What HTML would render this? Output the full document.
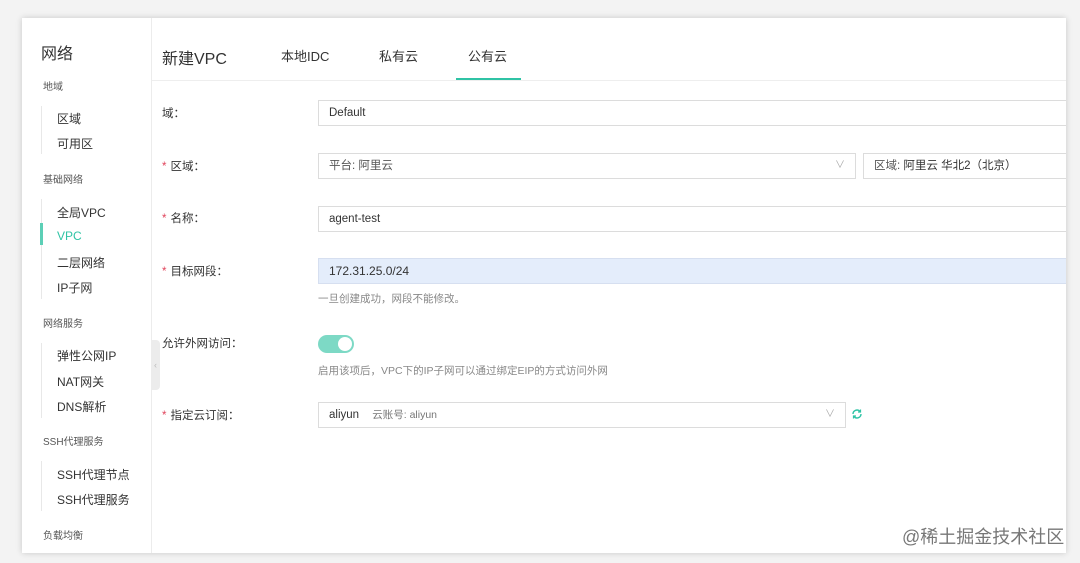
<!DOCTYPE html>
<html><head><meta charset="utf-8"><style>
*{box-sizing:border-box;margin:0;padding:0}
body{width:1080px;height:563px;background:#f3f3f3;font-family:"Liberation Sans","Noto Sans CJK SC",sans-serif;position:relative;overflow:hidden;color:#333}
.win{position:absolute;left:22px;top:18px;width:1044px;height:535px;background:#fff;box-shadow:0 0 6px rgba(0,0,0,.18);overflow:hidden}
.side{position:absolute;left:0;top:0;width:130px;height:535px;border-right:1px solid #ececec;background:#fff}
.side .t{position:absolute;left:19px;top:22px;font-size:16px;color:#333}
.g{position:absolute;left:21px;font-size:10px;color:#555}
.it{position:absolute;left:35px;font-size:12px;color:#333}
.vl{position:absolute;left:19px;width:1px;background:#e8e8e8}
.a{color:#2fc3a5}
.main{position:absolute;left:130px;top:0;right:0;height:535px}
.h{position:absolute;top:28px;font-size:13px;color:#333}
.lab{position:absolute;left:10px;font-size:11.5px;color:#333}
.lab b{color:#e0455c;font-weight:normal;margin-right:4px}
.in{position:absolute;height:26px;border:1px solid #dcdcdc;font-size:11.5px;line-height:24px;padding-left:10px;color:#333;background:#fff}
.hint{position:absolute;left:166px;font-size:10.5px;color:#888}
.chev{position:absolute;right:10px;top:0;color:#aaa;font-size:10px}
</style></head><body>
<div class="win">
<div class="side">
<div class="t">网络</div>
<div class="g" style="top:60px">地域</div>
<div class="vl" style="top:88px;height:48px"></div>
<div class="it" style="top:92px">区域</div>
<div class="it" style="top:117px">可用区</div>
<div class="g" style="top:153px">基础网络</div>
<div class="vl" style="top:181px;height:100px"></div>
<div style="position:absolute;left:18px;top:205px;width:3px;height:22px;background:#5ccfb6"></div>
<div class="it" style="top:186px">全局VPC</div>
<div class="it a" style="top:211px">VPC</div>
<div class="it" style="top:236px">二层网络</div>
<div class="it" style="top:261px">IP子网</div>
<div class="g" style="top:297px">网络服务</div>
<div class="vl" style="top:325px;height:75px"></div>
<div class="it" style="top:329px">弹性公网IP</div>
<div class="it" style="top:355px">NAT网关</div>
<div class="it" style="top:380px">DNS解析</div>
<div class="g" style="top:415px">SSH代理服务</div>
<div class="vl" style="top:443px;height:50px"></div>
<div class="it" style="top:448px">SSH代理节点</div>
<div class="it" style="top:473px">SSH代理服务</div>
<div class="g" style="top:509px">负载均衡</div>
</div>
<div style="position:absolute;left:129px;top:322px;width:9px;height:50px;background:#ececec;border-radius:0 4px 4px 0;color:#bbb;font-size:9px;line-height:50px;text-align:center">‹</div>
<div class="main">
<div class="h" style="left:10px;top:27px;font-size:16px">新建VPC</div>
<div class="h" style="left:129px">本地IDC</div>
<div class="h" style="left:227px">私有云</div>
<div class="h a" style="left:316px">公有云</div>
<div style="position:absolute;left:304px;top:60px;width:65px;height:2px;background:#2fc3a5"></div>
<div style="position:absolute;left:0;right:0;top:62px;height:1px;background:#eee"></div>
<div class="lab" style="top:87px">域：</div>
<div class="in" style="left:166px;top:82px;width:760px">Default</div>
<div class="lab" style="top:140px"><b>*</b>区域：</div>
<div class="in" style="left:166px;top:135px;width:538px;color:#555">平台: 阿里云<span class="chev">∨</span></div>
<div class="in" style="left:711px;top:135px;width:220px;color:#555">区域: <span style="color:#333">阿里云 华北2（北京）</span></div>
<div class="lab" style="top:192px"><b>*</b>名称：</div>
<div class="in" style="left:166px;top:188px;width:760px">agent-test</div>
<div class="lab" style="top:245px"><b>*</b>目标网段：</div>
<div class="in" style="left:166px;top:240px;width:760px;background:#e4edfb;border-color:#d6dff0;font-size:12px">172.31.25.0/24</div>
<div class="hint" style="top:273px">一旦创建成功，网段不能修改。</div>
<div class="lab" style="top:317px">允许外网访问：</div>
<div style="position:absolute;left:166px;top:317px;width:36px;height:18px;border-radius:9px;background:#7dd9c5"><div style="position:absolute;right:2px;top:2px;width:14px;height:14px;border-radius:7px;background:#fff"></div></div>
<div class="hint" style="top:345px">启用该项后，VPC下的IP子网可以通过绑定EIP的方式访问外网</div>
<div class="lab" style="top:389px"><b>*</b>指定云订阅：</div>
<div class="in" style="left:166px;top:384px;width:528px">aliyun <span style="color:#777;margin-left:10px;font-size:10.5px">云账号: aliyun</span><span class="chev">∨</span></div>
<svg style="position:absolute;left:699px;top:390px" width="12" height="12" viewBox="0 0 12 12"><path d="M2 6a4 4 0 0 1 7-2.6M10 6a4 4 0 0 1-7 2.6" fill="none" stroke="#2fc3a5" stroke-width="1.4"/><path d="M9.5 1.5v2.5H7M2.5 10.5V8H5" fill="none" stroke="#2fc3a5" stroke-width="1.2"/></svg>
</div>
</div>
<div style="position:absolute;left:902px;top:523px;font-size:18px;color:#777">@稀土掘金技术社区</div>
</body></html>
